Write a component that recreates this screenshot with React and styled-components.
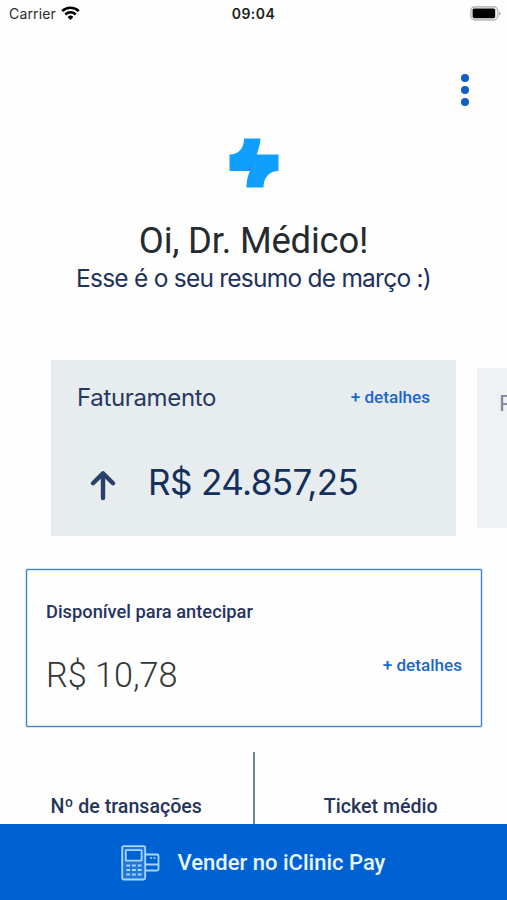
import React from "react";
import styled, { createGlobalStyle } from "styled-components";

const Global = createGlobalStyle`
  * { box-sizing: border-box; }
  body { margin: 0; background: #fefefe; }
`;

const Screen = styled.div`
  display: flex;
  flex-direction: column;
  height: 900px;
  overflow: hidden;
  background: #fefefe;
  font-family: Roboto, sans-serif;
  color: #20315c;
`;

const StatusBar = styled.header`
  display: grid;
  grid-template-columns: 1fr auto 1fr;
  align-items: center;
  flex: none;
  height: 27px;
  padding: 0 6px 0 9px;
  font: 400 14px/27px Inter, sans-serif;
  color: #2b2b2b;
`;

const Carrier = styled.div`
  display: flex;
  align-items: center;
  gap: 5px;
  letter-spacing: 0.15px;
`;

const Clock = styled.time`
  margin-right: 3px;
  font-weight: 600;
  letter-spacing: 0.45px;
  color: #1c1c1c;
`;

const Battery = styled.svg`
  justify-self: end;
`;

const TopBar = styled.div`
  display: flex;
  justify-content: flex-end;
  flex: none;
  height: 111px;
  padding: 45px 36px 0 0;
`;

const MenuButton = styled.button`
  display: flex;
  flex-direction: column;
  align-items: center;
  gap: 3.6px;
  width: 12px;
  height: 36px;
  padding: 2px 0 0;
  border: 0;
  background: none;
`;

const Dot = styled.i`
  width: 8.4px;
  height: 8.4px;
  border-radius: 50%;
  background: #0f60c4;
`;

const Greeting = styled.section`
  display: flex;
  flex-direction: column;
  align-items: center;
  flex: none;
  height: 222px;
`;

const Title = styled.h1`
  margin: 31px 0 0;
  font: 400 36.4px/44px Roboto, sans-serif;
  letter-spacing: -0.2px;
  color: #252b2e;
`;

const Subtitle = styled.p`
  margin: 0;
  font: 400 24.5px/30px Inter, sans-serif;
  letter-spacing: -0.76px;
  white-space: nowrap;
`;

const Carousel = styled.section`
  display: flex;
  align-items: center;
  flex: none;
  gap: 21px;
  height: 176px;
  padding-left: 51px;
  overflow: hidden;
`;

const Card = styled.article`
  flex: none;
  width: 405px;
  height: ${(p) => (p.$next ? 160 : 176)}px;
  padding: ${(p) => (p.$next ? "17px 22px" : "20px 26px")};
  background: ${(p) => (p.$next ? "#eef2f4" : "#e7ecee")};
`;

const CardHeader = styled.div`
  display: flex;
  align-items: center;
  justify-content: space-between;
  height: 36px;
`;

const CardTitle = styled.h2`
  margin: 0;
  font: 400 ${(p) => (p.$next ? 22 : 24)}px/36px Inter, sans-serif;
  letter-spacing: -0.34px;
  color: ${(p) => (p.$next ? "#7d859b" : "#2a3962")};
`;

const DetailsLink = styled.a`
  font: 500 17.1px/24px Roboto, sans-serif;
  color: #1b68c7;
`;

const CardDetails = styled(DetailsLink)`
  margin-top: -2px;
`;

const CardValue = styled.div`
  display: flex;
  align-items: center;
  gap: 31px;
  height: 44px;
  margin-top: 44px;
  padding-left: 12px;
  font: 400 35px/44px Inter, sans-serif;
  letter-spacing: -0.6px;
  color: #14305c;

  svg { margin-top: 6px; }
`;

const AdvanceBox = styled.section`
  display: flex;
  align-items: center;
  justify-content: space-between;
  flex: none;
  height: 158px;
  margin: 33px 25px 0 26px;
  padding: 0 19px;
  border: 1.5px solid #4a86c2;
  border-radius: 1px;
  box-shadow: 0 0 0 0.5px #a9c8e6, inset 0 0 0 0.5px #a9c8e6;
`;

const Available = styled.div`
  display: flex;
  flex-direction: column;
  gap: 28px;
  margin-top: -3px;
`;

const Label = styled.h3`
  margin: 0;
  font: 500 ${(p) => p.$size || 18.3}px/28px Roboto, sans-serif;
  color: #26345c;
`;

const Amount = styled.strong`
  font: 300 34.2px/42px Roboto, sans-serif;
  color: #333738;
`;

const AdvanceDetails = styled(DetailsLink)`
  margin-top: 34px;
`;

const Stats = styled.section`
  display: grid;
  grid-template-columns: 1fr 2px 1fr;
  flex: 1;
  min-height: 0;
  padding-top: 25px;
`;

const Stat = styled.div`
  padding-top: 41px;
  text-align: center;
`;

const Divider = styled.div`
  background: #6f8792;
`;

const PayButton = styled.button`
  display: flex;
  align-items: center;
  justify-content: center;
  flex: none;
  gap: 18px;
  height: 76px;
  padding: 1px 1px 0 0;
  border: 0;
  background: #0062d2;
  font: 500 22px/30px Roboto, sans-serif;
  color: #e9f5ff;
`;

const WifiIcon = () => (
  <svg width="19" height="15" viewBox="0 0 19 15" fill="none" stroke="#000" strokeWidth="2.5">
    <path d="M1.2 5.2a11.8 11.8 0 0 1 16.6 0" />
    <path d="M4.3 8.5a7.4 7.4 0 0 1 10.4 0" />
    <path d="M9.5 14 6.6 11a4.1 4.1 0 0 1 5.800 0z" fill="#000" stroke="none" />
  </svg>
);

const BatteryIcon = () => (
  <Battery width="31" height="15" viewBox="0 0 31 15">
    <rect x="0.9" y="0.9" width="26.8" height="13" rx="4" fill="#fff" stroke="#bdbdbd" strokeWidth="1.6" />
    <rect x="2.6" y="2.6" width="22.6" height="9.6" rx="1.6" fill="#000" />
    <path d="M29 5.4c2 .6 2 3.4 0 4z" fill="#aaa" />
  </Battery>
);

const Logo = () => (
  <svg width="50" height="50" viewBox="0 0 50 50">
    <defs>
      <linearGradient id="fold" x1="0" y1="0" x2="1" y2="0">
        <stop offset="0" stopColor="#109fff" />
        <stop offset="1" stopColor="#1b86ee" />
      </linearGradient>
    </defs>
    <path d="M15 .5H31.5C31 7.500 29 12 28 16.500H49.500V33C40 33 34.500 40 34.500 49.500H17.500C17.700 42 19 37 21 33H.5V16.500C10 16.500 15 10 15 .5z" fill="#109fff" />
    <path d="M28 16.500C23 19 22.500 29 14 33H21C23 29 22.500 21 28 16.500z" fill="url(#fold)" />
  </svg>
);

const ArrowUp = () => (
  <svg width="28" height="31" viewBox="0 0 28 31" fill="none" stroke="#2a3f69" strokeWidth="4.4" strokeLinecap="round" strokeLinejoin="round">
    <path d="M14 3.400V28M4 13.200 14 3.400 24 13.200" />
  </svg>
);

const TerminalIcon = () => (
  <svg width="39" height="36" viewBox="0 0 39 36" fill="none" stroke="#a5d6ff" strokeWidth="1.8">
    <rect x="1.200" y="1.200" width="23" height="33.300" rx="1.500" fill="#2377d9" />
    <rect x="4.800" y="5.200" width="15.800" height="10.500" rx="0.600" fill="#0062d2" />
    <path d="M5.300 20.500h3.800M11 20.500h3.800M16.700 20.500h3.800M5.300 25h3.800M11 25h3.800M16.700 25h3.800M5.300 29.500h3.800M11 29.500h3.800M16.700 29.500h3.800" strokeWidth="1.900" />
    <path d="M24.200 9.500H36a1.500 1.500 0 0 1 1.500 1.500V24a1.500 1.500 0 0 1-1.500 1.500H24.200M24.200 19.500H37.500" />
    <path d="M29 13h2M32.500 13h2" strokeWidth="1.400" />
  </svg>
);

export default function App() {
  return (
    <Screen>
      <Global />
      <StatusBar>
        <Carrier>Carrier <WifiIcon /></Carrier>
        <Clock>09:04</Clock>
        <BatteryIcon />
      </StatusBar>
      <TopBar>
        <MenuButton aria-label="Menu"><Dot /><Dot /><Dot /></MenuButton>
      </TopBar>
      <Greeting>
        <Logo />
        <Title>Oi, Dr. Médico!</Title>
        <Subtitle>Esse é o seu resumo de março :)</Subtitle>
      </Greeting>
      <Carousel>
        <Card>
          <CardHeader>
            <CardTitle>Faturamento</CardTitle>
            <CardDetails>+ detalhes</CardDetails>
          </CardHeader>
          <CardValue><ArrowUp />R$ 24.857,25</CardValue>
        </Card>
        <Card $next>
          <CardHeader>
            <CardTitle $next>P</CardTitle>
          </CardHeader>
        </Card>
      </Carousel>
      <AdvanceBox>
        <Available>
          <Label>Disponível para antecipar</Label>
          <Amount>R$ 10,78</Amount>
        </Available>
        <AdvanceDetails>+ detalhes</AdvanceDetails>
      </AdvanceBox>
      <Stats>
        <Stat><Label $size={19.6}>Nº de transações</Label></Stat>
        <Divider />
        <Stat><Label $size={19.6}>Ticket médio</Label></Stat>
      </Stats>
      <PayButton><TerminalIcon />Vender no iClinic Pay</PayButton>
    </Screen>
  );
}
